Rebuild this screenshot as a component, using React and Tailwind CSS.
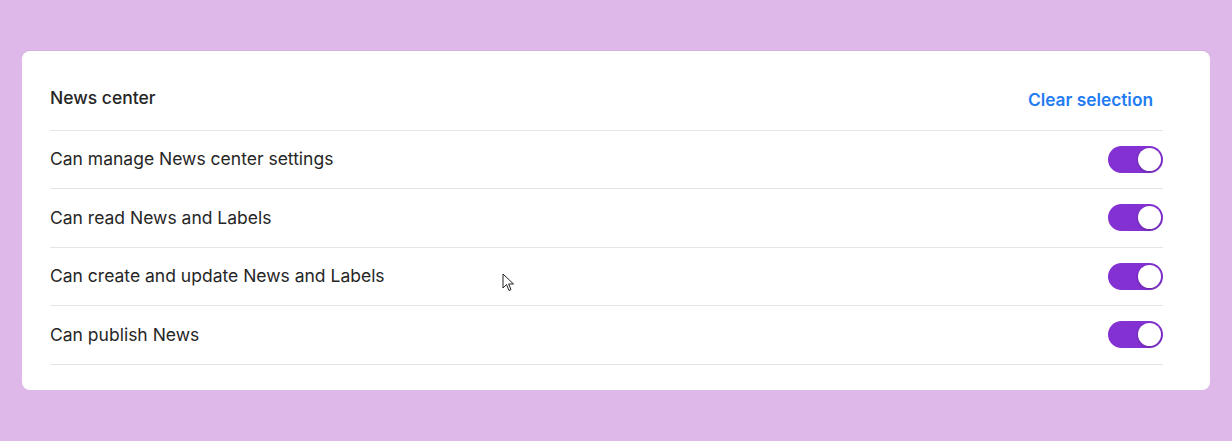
import React, { useState } from 'react';

const permissions = [
  'Can manage News center settings',
  'Can read News and Labels',
  'Can create and update News and Labels',
  'Can publish News',
];

const Toggle = ({ on, onChange }) => (
  <button
    onClick={onChange}
    className={`relative h-[27px] w-[55px] rounded-full transition ${on ? 'bg-[#8331d3]' : 'bg-gray-300'}`}
  >
    <span
      className={`absolute top-[2px] h-[23px] w-[23px] rounded-full bg-white shadow-[0_1px_3px_rgba(0,0,0,0.25)] transition-all ${on ? 'left-[30px]' : 'left-[2px]'}`}
    />
  </button>
);

export default function App() {
  const [enabled, setEnabled] = useState(permissions.map(() => true));

  const toggle = (i) => setEnabled(enabled.map((v, j) => (j === i ? !v : v)));

  return (
    <div
      className="relative min-h-[441px] bg-[#dfb8ea] px-[22px] pt-[51px] pb-[51px] text-[#262626]"
      style={{ fontFamily: 'Inter, "Noto Sans", sans-serif' }}
    >
      <div className="rounded-lg bg-white pl-7 pr-[47px] pb-[25px] shadow-[0_-1px_0_rgba(0,0,0,0.04)]">
        {/* Header */}
        <div className="flex h-[79.5px] items-start justify-between border-b border-[#e5e5e5] pt-[35px]">
          <h2 className="text-[17.5px] leading-6 font-medium">News center</h2>
          <button
            onClick={() => setEnabled(permissions.map(() => false))}
            className="mr-[10px] mt-[2px] text-[17.3px] leading-6 font-semibold text-[#1f7cf2]"
          >
            Clear selection
          </button>
        </div>
        {/* Rows */}
        {permissions.map((label, i) => (
          <div
            key={label}
            className="flex h-[58.5px] items-center justify-between border-b border-[#e5e5e5]"
          >
            <span className="text-[17.5px]">{label}</span>
            <Toggle on={enabled[i]} onChange={() => toggle(i)} />
          </div>
        ))}
      </div>
      {/* mouse cursor */}
      <svg className="absolute left-[502px] top-[273px]" width="13" height="20" viewBox="0 0 13 20">
        <path d="M1 1 L1 15 L4.5 11.5 L7 17.5 L9 16.6 L6.6 11 L11.5 11 Z" fill="white" stroke="#222" strokeWidth="1" strokeLinejoin="round" />
      </svg>
    </div>
  );
}
